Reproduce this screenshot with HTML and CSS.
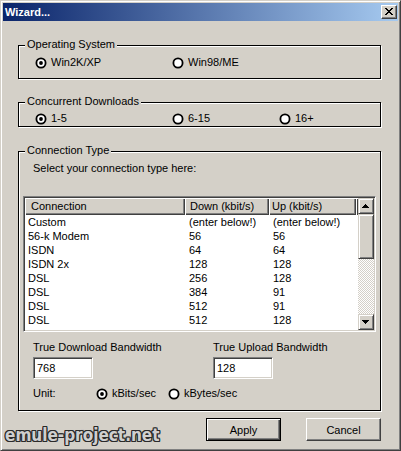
FILE: index.html
```html
<!DOCTYPE html>
<html>
<head>
<meta charset="utf-8">
<title>Wizard...</title>
<link rel="stylesheet" href="styles.css">
</head>
<body>
<div class="window">
  <div class="titlebar">
    <span class="title">Wizard...</span>
    <button class="close" aria-label="Close"><svg width="8" height="7" viewBox="0 0 8 7" shape-rendering="crispEdges"><path d="M0 0h2v1H0zM6 0h2v1H6zM1 1h2v1H1zM5 1h2v1H5zM2 2h4v1H2zM3 3h2v1H3zM2 4h4v1H2zM1 5h2v1H1zM5 5h2v1H5zM0 6h2v1H0zM6 6h2v1H6z" fill="#000"/></svg></button>
  </div>
  <div class="content">
    <div class="group g-os">
      <span class="legend">Operating System</span>
      <div class="row">
        <div class="radio w137"><svg class="rb" width="12" height="12" viewBox="0 0 12 12"><circle cx="6" cy="6" r="4.6" fill="#fff" stroke="#000" stroke-width="1.8"/><circle cx="6" cy="6" r="1.9" fill="#000"/></svg><span>Win2K/XP</span></div>
        <div class="radio"><svg class="rb" width="12" height="12" viewBox="0 0 12 12"><circle cx="6" cy="6" r="4.6" fill="#fff" stroke="#000" stroke-width="1.8"/></svg><span>Win98/ME</span></div>
      </div>
    </div>
    <div class="group g-cd">
      <span class="legend">Concurrent Downloads</span>
      <div class="row">
        <div class="radio w137"><svg class="rb" width="12" height="12" viewBox="0 0 12 12"><circle cx="6" cy="6" r="4.6" fill="#fff" stroke="#000" stroke-width="1.8"/><circle cx="6" cy="6" r="1.9" fill="#000"/></svg><span>1-5</span></div>
        <div class="radio w107"><svg class="rb" width="12" height="12" viewBox="0 0 12 12"><circle cx="6" cy="6" r="4.6" fill="#fff" stroke="#000" stroke-width="1.8"/></svg><span>6-15</span></div>
        <div class="radio"><svg class="rb" width="12" height="12" viewBox="0 0 12 12"><circle cx="6" cy="6" r="4.6" fill="#fff" stroke="#000" stroke-width="1.8"/></svg><span>16+</span></div>
      </div>
    </div>
    <div class="group g-ct">
      <span class="legend">Connection Type</span>
      <div class="hint">Select your connection type here:</div>
      <div class="list">
        <div class="table">
          <div class="thead">
            <div class="th c1">Connection</div>
            <div class="th c2">Down (kbit/s)</div>
            <div class="th c3">Up (kbit/s)</div>
            <div class="th cf"></div>
          </div>
          <div class="tr"><div class="td c1">Custom</div><div class="td c2">(enter below!)</div><div class="td c3">(enter below!)</div></div>
          <div class="tr"><div class="td c1">56-k Modem</div><div class="td c2">56</div><div class="td c3">56</div></div>
          <div class="tr"><div class="td c1">ISDN</div><div class="td c2">64</div><div class="td c3">64</div></div>
          <div class="tr"><div class="td c1">ISDN 2x</div><div class="td c2">128</div><div class="td c3">128</div></div>
          <div class="tr"><div class="td c1">DSL</div><div class="td c2">256</div><div class="td c3">128</div></div>
          <div class="tr"><div class="td c1">DSL</div><div class="td c2">384</div><div class="td c3">91</div></div>
          <div class="tr"><div class="td c1">DSL</div><div class="td c2">512</div><div class="td c3">91</div></div>
          <div class="tr"><div class="td c1">DSL</div><div class="td c2">512</div><div class="td c3">128</div></div>
          <div class="tr"><div class="td c1">DSL</div><div class="td c2">640</div><div class="td c3">90</div></div>
        </div>
        <div class="vscroll">
          <div class="sb-btn"><svg width="7" height="4" viewBox="0 0 7 4" shape-rendering="crispEdges"><path d="M3 0h1v1H3zM2 1h3v1H2zM1 2h5v1H1zM0 3h7v1H0z" fill="#000"/></svg></div>
          <div class="thumb"></div>
          <div class="track"></div>
          <div class="sb-btn"><svg width="7" height="4" viewBox="0 0 7 4" shape-rendering="crispEdges"><path d="M0 0h7v1H0zM1 1h5v1H1zM2 2h3v1H2zM3 3h1v1H3z" fill="#000"/></svg></div>
        </div>
      </div>
      <div class="bw">
        <div class="bw-label">True Download Bandwidth</div>
        <div class="bw-label">True Upload Bandwidth</div>
        <div class="edit">768</div>
        <div class="edit">128</div>
      </div>
      <div class="unit">
        <span class="unit-label">Unit:</span>
        <div class="radio w72"><svg class="rb" width="12" height="12" viewBox="0 0 12 12"><circle cx="6" cy="6" r="4.6" fill="#fff" stroke="#000" stroke-width="1.8"/><circle cx="6" cy="6" r="1.9" fill="#000"/></svg><span>kBits/sec</span></div>
        <div class="radio"><svg class="rb" width="12" height="12" viewBox="0 0 12 12"><circle cx="6" cy="6" r="4.6" fill="#fff" stroke="#000" stroke-width="1.8"/></svg><span>kBytes/sec</span></div>
      </div>
    </div>
    <div class="actions">
      <button class="btn default">Apply</button>
      <button class="btn">Cancel</button>
    </div>
  </div>
  <div class="watermark">emule-project.net</div>
</div>
</body>
</html>
```

FILE: styles.css
```css
* { box-sizing: border-box; }
html, body { margin: 0; padding: 0; }
body {
  background: #d4d0c8;
  font-family: "Liberation Sans", Arial, sans-serif;
  font-size: 11px;
  color: #000;
}
.window {
  position: relative;
  width: 401px;
  height: 451px;
  background: #d4d0c8;
  border: 1px solid;
  border-color: #d4d0c8 #404040 #404040 #d4d0c8;
  box-shadow: inset 1px 1px #fff, inset -1px -1px #808080;
  padding: 2px;
  display: flex;
  flex-direction: column;
  overflow: hidden;
}
.titlebar {
  height: 18px;
  flex: none;
  display: flex;
  align-items: center;
  justify-content: space-between;
  padding: 0 1px 0 2px;
  background: linear-gradient(to right, #0a246a, #a6caf0);
}
.title {
  color: #fff;
  font-weight: bold;
  font-size: 11px;
  line-height: 13px;
}
.close {
  width: 16px;
  height: 14px;
  margin: 0;
  padding: 0 1px 1px 0;
  background: #d4d0c8;
  border: 1px solid;
  border-color: #fff #404040 #404040 #fff;
  box-shadow: inset -1px -1px #808080;
  display: flex;
  align-items: center;
  justify-content: center;
}
.content {
  flex: 1;
  padding: 0 17px 0 15px;
}
.group {
  position: relative;
  border: 1px solid #000;
  box-shadow: 1px 1px 0 #fff, inset 1px 1px 0 #fff;
}
.legend {
  position: absolute;
  top: -8px;
  left: 6px;
  padding: 0 2px;
  background: #d4d0c8;
  line-height: 13px;
  white-space: nowrap;
}
.g-os { margin-top: 24px; height: 34px; padding: 10px 0 0 16px; }
.g-cd { margin-top: 23px; height: 25px; padding: 9px 0 0 16px; }
.g-ct { margin-top: 24px; height: 260px; padding: 10px 4px 0 4px; }
.row { display: flex; height: 13px; line-height: 13px; }
.radio {
  display: flex;
  align-items: center;
  gap: 4px;
  line-height: 13px;
  white-space: nowrap;
}
.rb { flex: none; display: block; }
.w137 { width: 137px; }
.w107 { width: 107px; }
.w72 { width: 72px; }
.hint { margin-left: 10px; line-height: 13px; }
.list {
  margin-top: 21px;
  height: 136px;
  display: flex;
  background: #fff;
  border: 1px solid;
  border-color: #808080 #fff #fff #808080;
  box-shadow: inset 1px 1px #404040, inset -1px -1px #d4d0c8;
  padding: 1px;
}
.table {
  flex: 1;
  display: flex;
  flex-direction: column;
  overflow: hidden;
  background: #fff;
}
.thead { display: flex; height: 17px; flex: none; }
.th {
  background: #d4d0c8;
  box-shadow: inset 1px 1px #fff, inset -1px -1px #404040, inset -2px -2px #808080;
  line-height: 16px;
  white-space: nowrap;
  overflow: hidden;
}
.th.c1 { width: 160px; padding-left: 6px; }
.th.c2 { width: 84px; padding-left: 5px; }
.th.c3 { width: 87px; padding-left: 3px; }
.th.cf { flex: 1; }
.tr { display: flex; height: 14px; line-height: 14px; flex: none; }
.td { white-space: nowrap; overflow: hidden; }
.td.c1 { width: 160px; padding-left: 3px; }
.td.c2 { width: 84px; padding-left: 4px; }
.td.c3 { width: 87px; padding-left: 4px; }
.vscroll {
  width: 16px;
  flex: none;
  display: flex;
  flex-direction: column;
}
.sb-btn, .thumb {
  background: #d4d0c8;
  border: 1px solid;
  border-color: #d4d0c8 #404040 #404040 #d4d0c8;
  box-shadow: inset 1px 1px #fff, inset -1px -1px #808080;
}
.sb-btn {
  height: 16px;
  flex: none;
  display: flex;
  align-items: center;
  justify-content: center;
  padding-right: 1px;
}
.sb-btn svg { display: block; }
.thumb { height: 45px; flex: none; }
.track {
  flex: 1;
  background-color: #fff;
  background-image: repeating-conic-gradient(#d4d0c8 0 25%, #fff 0 50%);
  background-size: 2px 2px;
}
.bw {
  display: grid;
  grid-template-columns: 180px 1fr;
  row-gap: 3px;
  margin: 9px 0 0 10px;
}
.bw-label { line-height: 13px; white-space: nowrap; }
.edit {
  width: 60px;
  height: 22px;
  background: #fff;
  border: 1px solid;
  border-color: #808080 #fff #fff #808080;
  box-shadow: inset 1px 1px #404040, inset -1px -1px #d4d0c8;
  padding: 0 3px;
  line-height: 20px;
}
.unit {
  display: flex;
  align-items: center;
  height: 13px;
  line-height: 13px;
  margin: 8px 0 0 10px;
}
.unit-label { width: 63px; flex: none; }
.actions {
  display: flex;
  justify-content: flex-end;
  gap: 25px;
  margin-top: 7px;
}
.btn {
  width: 75px;
  height: 23px;
  margin: 0;
  padding: 0;
  font-family: "Liberation Sans", Arial, sans-serif;
  font-size: 11px;
  color: #000;
  background: #d4d0c8;
  border: 1px solid;
  border-color: #fff #404040 #404040 #fff;
  box-shadow: inset -1px -1px #808080;
}
.btn.default {
  border: 1px solid #000;
  box-shadow: inset 1px 1px #fff, inset -1px -1px #404040, inset -2px -2px #808080;
}
.watermark {
  position: absolute;
  left: 4px;
  top: 424px;
  font-family: "DejaVu Sans Condensed", "DejaVu Sans", sans-serif;
  font-stretch: condensed;
  font-weight: bold;
  font-size: 17px;
  line-height: 20px;
  color: #cfcfcf;
  white-space: nowrap;
  text-shadow: -1px -1px 0 #2a2a2a, 1px -1px 0 #2a2a2a, -1px 1px 0 #2a2a2a, 1px 1px 0 #2a2a2a,
    0 -1px 0 #2a2a2a, 0 1px 0 #2a2a2a, -1px 0 0 #2a2a2a, 1px 0 0 #2a2a2a;
}
```
